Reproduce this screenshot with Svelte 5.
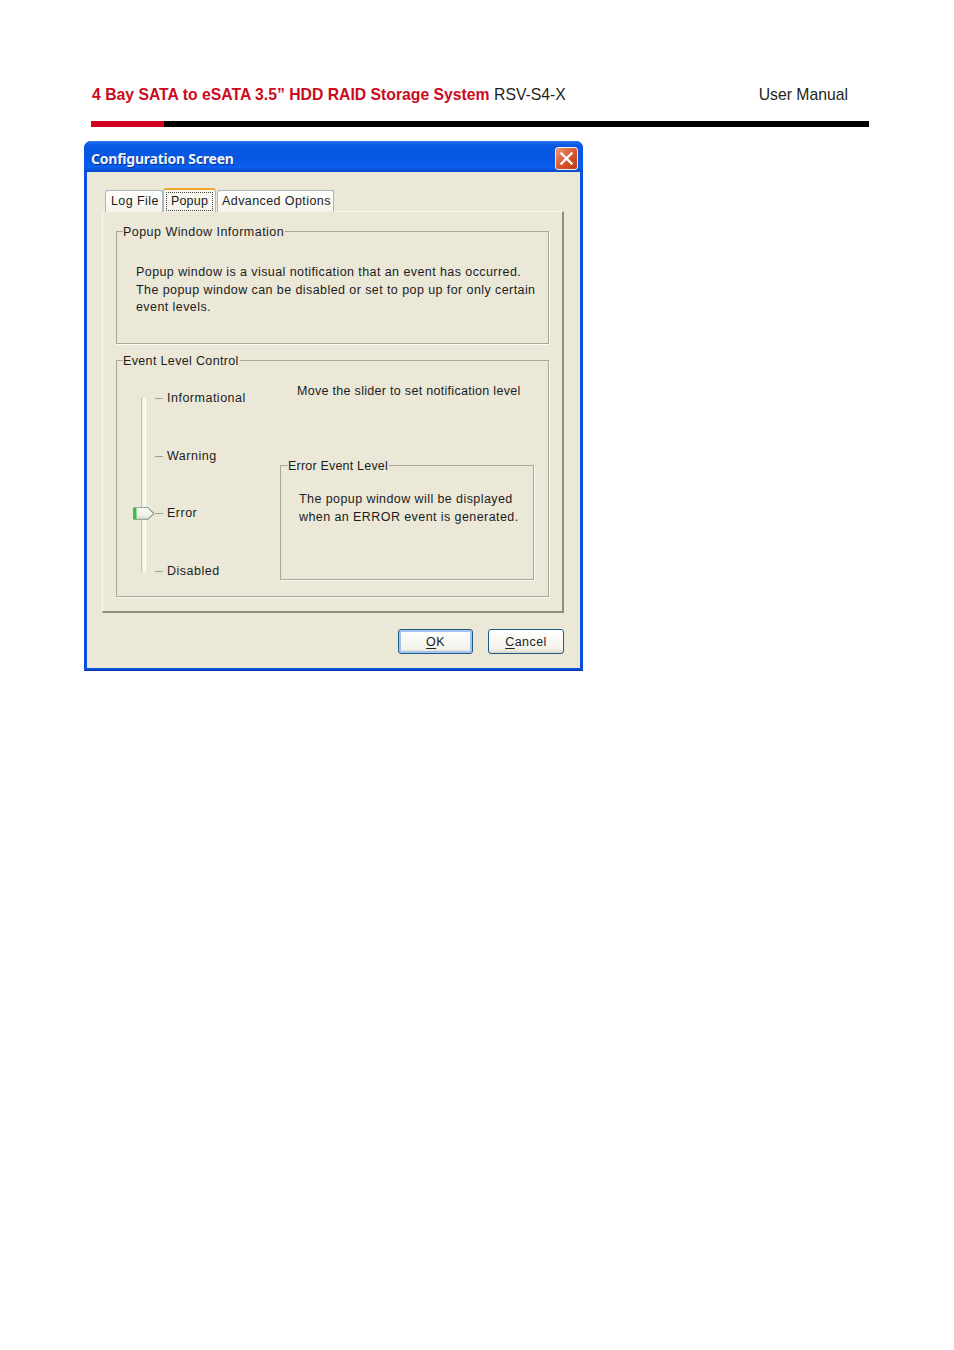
<script lang="ts">
  const levels = [
    { name: 'Informational', selected: false },
    { name: 'Warning', selected: false },
    { name: 'Error', selected: true },
    { name: 'Disabled', selected: false },
  ];
</script>

<style>
  :global(body) {
    margin: 0;
    background: #fff;
  }

  .page {
    width: 954px;
    height: 1350px;
    box-sizing: border-box;
    padding-top: 85px;
    font-family: "Liberation Sans", Arial, sans-serif;
  }

  .doc-head {
    display: flex;
    justify-content: space-between;
    height: 20px;
    margin: 0 106px 0 92px;
    font-size: 15.75px;
    line-height: 20px;
    color: #231f20;
  }

  .doc-head strong {
    color: #cc0a1e;
  }

  .rule {
    display: flex;
    height: 6px;
    margin: 16px 85px 14px 91px;
    background: #000;
  }

  .rule-red {
    width: 73px;
    background: #d0021f;
  }

  .window {
    box-sizing: border-box;
    width: 499px;
    height: 530px;
    margin-left: 84px;
    padding: 0 3px 2px;
    background: #0a50dc;
    border-bottom: 1px solid #0a2fa8;
    border-radius: 7px 7px 0 0;
    display: flex;
    flex-direction: column;
  }

  .titlebar {
    flex: none;
    box-sizing: border-box;
    height: 31px;
    margin: 0 -3px;
    padding: 5px 5px 2px 7px;
    display: flex;
    align-items: center;
    justify-content: space-between;
    border-radius: 7px 7px 0 0;
    background: linear-gradient(180deg, #2a78f0 0%, #0a5ae6 12%, #0656e2 50%, #0a5fee 85%, #0a48c8 100%);
  }

  .title {
    font-family: "Noto Sans", sans-serif;
    font-size: 14px;
    font-weight: bold;
    letter-spacing: -0.23px;
    color: #eef4ff;
    text-shadow: 1px 1px 0 #0a2f90;
  }

  .close {
    width: 23px;
    height: 23px;
    box-sizing: border-box;
    border: 1px solid #e8eef8;
    border-radius: 3px;
    background: linear-gradient(135deg, #ec9a78, #d9532a 55%, #bd3c14);
    display: flex;
  }

  .client {
    flex: 1;
    background: #ebe8d8;
    padding: 16px 16px 0 15px;
    display: flex;
    flex-direction: column;
    font-size: 12.5px;
    color: #1c1c1c;
    letter-spacing: 0.42px;
  }

  .tabs {
    display: flex;
    align-items: flex-end;
    height: 24px;
    padding-left: 3px;
    position: relative;
    z-index: 1;
    margin-bottom: -1px;
  }

  .tab {
    box-sizing: border-box;
    height: 22px;
    padding: 0 4px;
    line-height: 21px;
    border: 1px solid #a9b6bc;
    border-bottom: none;
    border-radius: 3px 3px 0 0;
    background: linear-gradient(180deg, #fff, #f4f3ec);
    margin-right: 1px;
    white-space: nowrap;
  }

  .tab.first {
    width: 58px;
    padding-left: 5px;
    margin-right: 0;
  }

  .tab.active {
    width: 53px;
    height: 24px;
    padding: 2px 2px 0;
    border-top: 2px solid #f2a52c;
    border-left-color: #b8b8a8;
    border-right-color: #b8b8a8;
    background: #f7f6ef;
    margin-right: 1px;
  }

  .focus {
    display: block;
    height: 19px;
    line-height: 16px;
    text-align: center;
    letter-spacing: 0.2px;
    border: 1px dotted #444;
    box-sizing: border-box;
  }

  .tab.last {
    width: 117px;
  }

  .panel {
    box-sizing: border-box;
    height: 402px;
    padding: 12px 13px 0 13px;
    border: 1px solid #f8f7f0;
    border-right: 2px solid #8f8f80;
    border-bottom: 2px solid #8f8f80;
    display: flex;
    flex-direction: column;
    gap: 9px;
  }

  fieldset {
    margin: 0;
    padding: 0;
    min-width: 0;
    border: 1px solid #a8a898;
    box-shadow: 1px 1px 0 #fbfaf4;
  }

  legend {
    position: relative;
    top: 1px;
    margin-left: 6px;
    padding: 0 1px 0 0;
    line-height: 14px;
    letter-spacing: 0.46px;
    white-space: nowrap;
  }

  .events > legend {
    letter-spacing: 0.35px;
  }

  .info {
    box-sizing: border-box;
    height: 120px;
  }

  .info p {
    margin: 0;
    padding: 26px 0 0 19px;
    line-height: 17.5px;
  }

  .events {
    box-sizing: border-box;
    height: 244px;
    display: grid;
    grid-template-columns: 163px 254px;
  }

  .slider {
    position: relative;
    margin: 23px 0 0 12px;
    padding-left: 26px;
    height: 186px;
    display: grid;
    grid-template-rows: repeat(4, 57.7px);
    letter-spacing: 0.5px;
  }

  .track {
    position: absolute;
    left: 12px;
    top: 7px;
    width: 3px;
    height: 176px;
    background: #f4f3ec;
    border-left: 1px solid #bdbdb0;
    border-right: 1px solid #fff;
    border-radius: 3px;
  }

  .level {
    display: flex;
    align-items: flex-start;
    gap: 4px;
    line-height: 16px;
    position: relative;
  }

  .tick {
    width: 8px;
    height: 1px;
    margin-top: 8px;
    background: #a0a090;
  }

  .thumb {
    position: absolute;
    left: -23px;
    top: 1px;
  }

  .side {
    display: flex;
    flex-direction: column;
    padding-top: 16px;
  }

  .hint {
    margin: 0 0 0 17px;
    height: 75px;
    line-height: 16px;
    letter-spacing: 0.3px;
  }

  .detail {
    box-sizing: border-box;
    height: 122px;
  }

  .detail legend {
    margin-left: 7px;
    letter-spacing: 0.2px;
  }

  .detail p {
    margin: 0;
    padding: 18px 0 0 18px;
    line-height: 18px;
  }

  .actions {
    display: flex;
    justify-content: flex-end;
    gap: 15px;
    padding: 16px 0 0;
  }

  button {
    box-sizing: border-box;
    width: 76px;
    height: 25px;
    padding: 0;
    font: inherit;
    letter-spacing: inherit;
    color: #222;
    border: 1px solid #1d5c88;
    border-radius: 3px;
    background: linear-gradient(180deg, #fff, #f4f3ec 80%, #dcd8c8);
  }

  button.default {
    width: 75px;
    box-shadow: inset 0 0 0 2px #a6c2ee;
  }

  u {
    text-underline-offset: 2px;
  }
</style>

<div class="page">
  <header class="doc-head">
    <span><strong>4 Bay SATA to eSATA 3.5” HDD RAID Storage System</strong> RSV-S4-X</span>
    <span>User Manual</span>
  </header>
  <div class="rule"><div class="rule-red"></div></div>

  <div class="window">
    <div class="titlebar">
      <span class="title">Configuration Screen</span>
      <span class="close">
        <svg width="21" height="21" viewBox="0 0 21 21">
          <path d="M5.5 5.5 15.5 15.5 M15.5 5.5 5.5 15.5" stroke="#fff" stroke-width="2.4" stroke-linecap="square" />
        </svg>
      </span>
    </div>

    <div class="client">
      <div class="tabs">
        <div class="tab first">Log File</div>
        <div class="tab active"><span class="focus">Popup</span></div>
        <div class="tab last">Advanced Options</div>
      </div>

      <div class="panel">
        <fieldset class="info">
          <legend>Popup Window Information</legend>
          <p>
            Popup window is a visual notification that an event has occurred.<br />
            The popup window can be disabled or set to pop up for only certain<br />
            event levels.
          </p>
        </fieldset>

        <fieldset class="events">
          <legend>Event Level Control</legend>
          <div class="slider">
            <div class="track"></div>
            {#each levels as level}
              <div class="level">
                {#if level.selected}
                  <svg class="thumb" width="24" height="15" viewBox="0 0 24 15">
                    <defs>
                      <linearGradient id="thumb-body" x1="0" y1="0" x2="0" y2="1">
                        <stop offset="0" stop-color="#fbfbf6" />
                        <stop offset="0.7" stop-color="#f0f0e6" />
                        <stop offset="1" stop-color="#c8c8b8" />
                      </linearGradient>
                    </defs>
                    <path d="M1.5 1.5H15.5L22 7.5l-6.5 6H1.5z" fill="url(#thumb-body)" stroke="#9aa896" />
                    <path d="M15.5 1.5 22 7.5l-6.5 6" fill="none" stroke="#5f9a62" />
                    <rect x="1" y="2" width="3.5" height="11" fill="#36c03c" />
                  </svg>
                {/if}
                <span class="tick"></span>
                <span>{level.name}</span>
              </div>
            {/each}
          </div>

          <div class="side">
            <p class="hint">Move the slider to set notification level</p>
            <fieldset class="detail">
              <legend>Error Event Level</legend>
              <p>The popup window will be displayed<br />when an ERROR event is generated.</p>
            </fieldset>
          </div>
        </fieldset>
      </div>

      <div class="actions">
        <button class="default"><u>O</u>K</button>
        <button><u>C</u>ancel</button>
      </div>
    </div>
  </div>
</div>
